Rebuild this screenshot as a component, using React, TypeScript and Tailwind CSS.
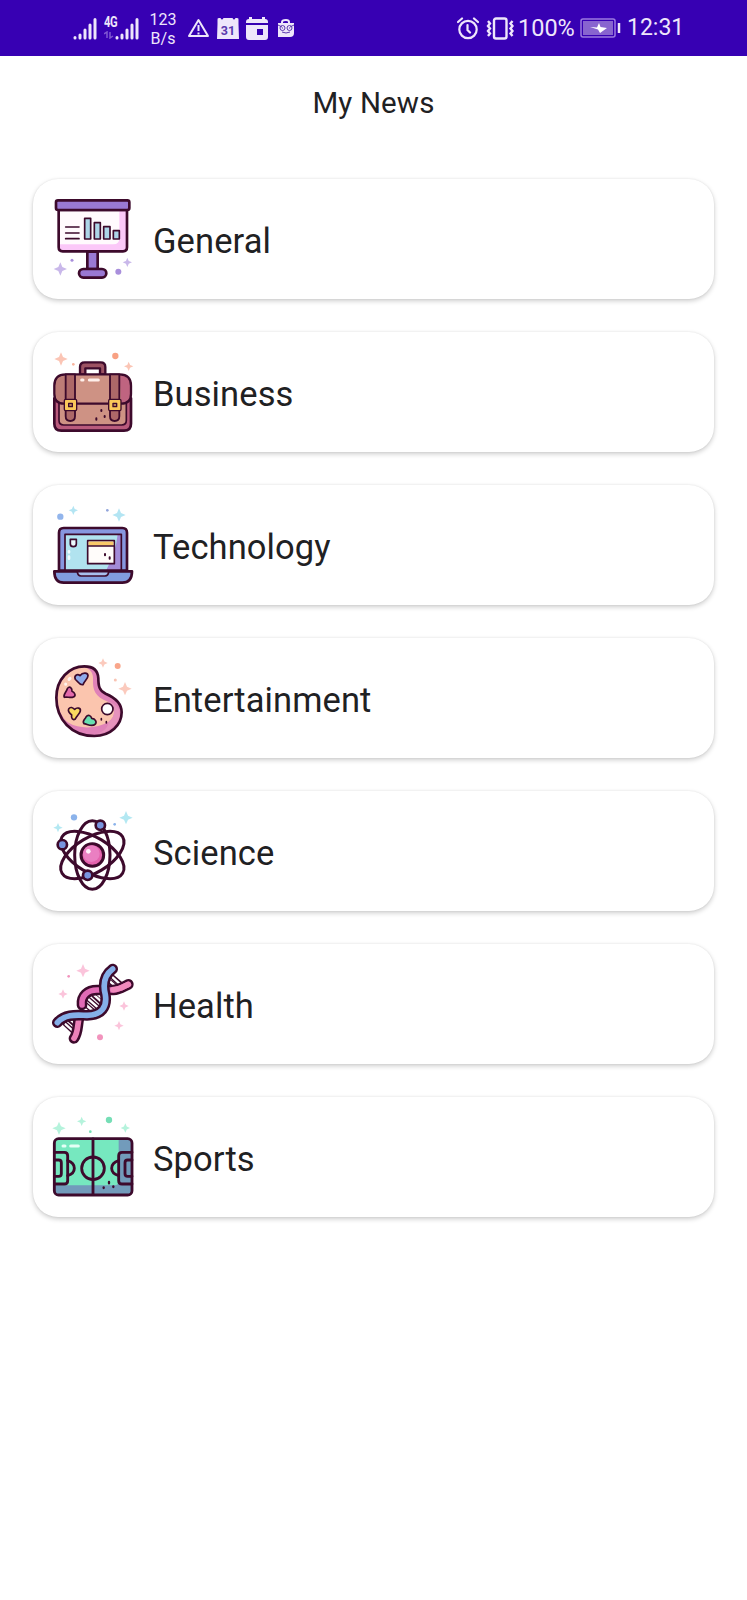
import type { ReactNode } from 'react';

const INK = '#3d0a2c';

function Sparkle({ x, y, r, fill }: { x: number; y: number; r: number; fill: string }) {
  const k = r * 0.3;
  return (
    <path
      fill={fill}
      d={`M${x} ${y - r}L${x + k} ${y - k}L${x + r} ${y}L${x + k} ${y + k}L${x} ${y + r}L${x - k} ${y + k}L${x - r} ${y}L${x - k} ${y - k}Z`}
    />
  );
}

function Icon({ viewBox, children }: { viewBox: string; children: ReactNode }) {
  return (
    <svg
      className="size-[100px] shrink-0"
      viewBox={viewBox}
      fill="none"
      stroke="none"
      strokeLinecap="round"
      strokeLinejoin="round"
    >
      {children}
    </svg>
  );
}

function GeneralIcon() {
  return (
    <Icon viewBox="45 42 300 300">
      <Sparkle x={91} y={282} r={20} fill="#c9b8ea" />
      <Sparkle x={292} y={262} r={14} fill="#c9b8ea" />
      <circle cx="265" cy="290" r="9" fill="#a98fdc" />
      <circle cx="126" cy="256" r="4.5" fill="#a98fdc" />
      <path d="M86 105H291V217Q291 229 279 229H98Q86 229 86 217Z" fill="#fbc8f8" />
      <path d="M88 108H268V190Q268 208 250 208H88Z" fill="#fffafd" />
      <path d="M86 105H291V217Q291 229 279 229H98Q86 229 86 217Z" stroke={INK} strokeWidth="8" />
      <rect x="172" y="230" width="31" height="52" fill="#9a78d3" stroke={INK} strokeWidth="8" />
      <rect x="78" y="76" width="220" height="29" rx="6" fill="#9a78d3" stroke={INK} strokeWidth="8" />
      <rect x="147" y="282" width="82" height="26" rx="13" fill="#9a78d3" stroke={INK} strokeWidth="8" />
      <path d="M107 156H147M107 174H147M107 191H147" stroke={INK} strokeWidth="5" />
      <g fill="#add5e8" stroke={INK} strokeWidth="5">
        <path d="M164 130H182V192H164ZM193 143H211V192H193ZM221 155H240V192H221ZM250 167H268V192H250Z" />
      </g>
    </Icon>
  );
}

function BusinessIcon() {
  return (
    <Icon viewBox="0 -9 300 300">
      <Sparkle x={48} y={42} r={20} fill="#fbc5b5" />
      <Sparkle x={251} y={64} r={14} fill="#fbc5b5" />
      <circle cx="211" cy="33" r="9.5" fill="#f8a183" />
      <circle cx="85" cy="58" r="4" fill="#f8b39c" />
      <path d="M105 88V66Q105 52 119 52H167Q181 52 181 66V88H165V70H121V88Z" fill="#9c5262" stroke={INK} strokeWidth="7" />
      <path d="M28 160H258V236Q258 257 237 257H49Q28 257 28 236Z" fill="#b95a7c" stroke={INK} strokeWidth="8" />
      <path d="M42 170H244V226Q244 240 230 240H56Q42 240 42 226Z" fill="#ce9284" stroke={INK} strokeWidth="5" />
      <path d="M62 88H224Q258 88 258 122V146Q258 176 228 176H58Q28 176 28 146V122Q28 88 62 88Z" fill="#ce9284" />
      <path d="M224 91Q255 91 255 122V146Q255 173 228 173Z" fill="#bf6480" />
      <path d="M32 122Q32 94 60 92V172Q32 172 32 146Z" fill="#bd7c76" />
      <path d="M62 88H224Q258 88 258 122V146Q258 176 228 176H58Q28 176 28 146V122Q28 88 62 88Z" stroke={INK} strokeWidth="7" />
      <path d="M62 88H90V214Q90 228 76 228Q62 228 62 214ZM195 88H223V214Q223 228 209 228Q195 228 195 214Z" fill="#ad6868" stroke={INK} strokeWidth="5.5" />
      <g fill="#f9c85a" stroke={INK} strokeWidth="4">
        <rect x="58" y="163" width="37" height="34" rx="4" />
        <rect x="191" y="163" width="37" height="34" rx="4" />
        <rect x="71" y="175" width="11" height="10" fill="#b98154" />
        <rect x="204" y="175" width="11" height="10" fill="#b98154" />
      </g>
      <path d="M110 105H114M133 105H160" stroke="#fff0eb" strokeWidth="9" />
      <path d="M169 195V198M179 213V216M154 220V224" stroke={INK} strokeWidth="6" />
    </Icon>
  );
}

function TechnologyIcon() {
  return (
    <Icon viewBox="0 0 300 300">
      <Sparkle x={85} y={46} r={14} fill="#b3e5f3" />
      <Sparkle x={222} y={60} r={20} fill="#b3e5f3" />
      <circle cx="46" cy="65" r="9.5" fill="#92b5ec" />
      <circle cx="187" cy="46" r="4" fill="#92a5dc" />
      <path d="M42 227V113Q42 99 56 99H232Q246 99 246 113V227Z" fill="#8797df" stroke={INK} strokeWidth="8" />
      <path d="M60 225V118H229V225Z" fill="#a38bd8" />
      <path d="M60 225V118H218Q213 170 184 225Z" fill="#b1e3ef" />
      <path d="M60 225V118H229V225Z" stroke={INK} strokeWidth="5" />
      <path d="M28 229H261Q261 263 232 263H56Q28 263 28 229Z" fill="#819ddf" stroke={INK} strokeWidth="8" />
      <path d="M97 230H191Q190 243 180 243H108Q98 243 97 230Z" fill="#a8bfee" stroke={INK} strokeWidth="5" />
      <rect x="128" y="137" width="80" height="69" fill="#fffcfa" stroke={INK} strokeWidth="5" />
      <path d="M131 140H205V152H131Z" fill="#f9ca69" />
      <path d="M128 153H208" stroke={INK} strokeWidth="4" />
      <path d="M76 133H94V147Q94 155 85 155Q76 155 76 147Z" fill="#edf9fd" stroke={INK} strokeWidth="5" />
      <path d="M180 177V181M194 187V191" stroke={INK} strokeWidth="6" />
      <path d="M72 169V172M72 185V191" stroke="#f2fcff" strokeWidth="8" />
    </Icon>
  );
}

function EntertainmentIcon() {
  const outline =
    'M160 85C159 60 142 49 118 49C73 49 34 87 34 143C34 208 79 258 148 258C198 258 230 224 230 187C230 157 206 141 182 131C162 122 160 107 160 85Z';
  return (
    <Icon viewBox="0 -6 300 300">
      <Sparkle x={174} y={39} r={14} fill="#fbcabd" />
      <Sparkle x={240} y={116} r={20} fill="#fbcabd" />
      <circle cx="218" cy="48" r="9" fill="#f9a68b" />
      <circle cx="211" cy="90" r="4.5" fill="#f9c4b4" />
      <path d={outline} fill="#e082b8" />
      <path d="M129 56C112 50 102 53 94 56C60 66 38 98 38 143C38 180 52 205 72 219C104 238 156 236 190 216C214 199 212 172 189 155C150 141 143 120 144 91C145 76 142 64 129 56Z" fill="#fbc5ae" />
      <path d="M190 216C214 199 212 172 189 155C215 160 226 178 224 195C220 225 190 250 150 253C180 245 190 230 190 216Z" fill="#e693bd" />
      <path d={outline} stroke={INK} strokeWidth="8" />
      <g stroke={INK} strokeWidth="5">
        <path d="M91 88C86 77 97 70 105 77C112 68 128 66 129 77C129 86 117 94 114 104C103 107 98 93 91 88Z" fill="#8fabea" />
        <path d="M58 142C53 135 64 127 67 116C73 106 82 114 81 124C90 128 94 137 85 141C77 145 65 139 58 142Z" fill="#e36aab" />
        <path d="M71 177C76 169 83 173 89 178C96 171 108 174 106 183C104 193 95 197 91 207C83 212 78 204 80 195C74 190 68 183 71 177Z" fill="#fad95f" />
        <path d="M117 221C110 213 120 209 123 201C129 193 138 196 140 205C151 206 157 216 150 223C142 231 130 224 117 221Z" fill="#67dfb0" />
        <circle cx="187" cy="177" r="17" fill="#fff" />
      </g>
      <path d="M169 206V210M184 215V219" stroke={INK} strokeWidth="5" />
      <path d="M72 88L75 85M62 102V103" stroke="#fff4ee" strokeWidth="9" />
    </Icon>
  );
}

function ScienceIcon() {
  return (
    <Icon viewBox="0 -6 300 300">
      <Sparkle x={39} y={74} r={14} fill="#b3e8f2" />
      <Sparkle x={243} y={44} r={20} fill="#b3e8f2" />
      <circle cx="87" cy="43" r="9.5" fill="#8bb3eb" />
      <circle cx="209" cy="64" r="4" fill="#8bb3eb" />
      <g stroke={INK} strokeWidth="9">
        <ellipse cx="142" cy="156" rx="53" ry="103" />
        <ellipse cx="142" cy="156" rx="106" ry="53" transform="rotate(31 142 156)" />
        <ellipse cx="142" cy="156" rx="106" ry="53" transform="rotate(-31 142 156)" />
        <circle cx="142" cy="156" r="34" fill="#e463ad" />
      </g>
      <circle cx="139" cy="152" r="25" fill="#ea7fc2" />
      <circle cx="130" cy="145" r="7" fill="#fff0fa" />
      <g fill="#7895df" stroke={INK} strokeWidth="8">
        <circle cx="166" cy="67" r="14" />
        <circle cx="52" cy="125" r="14" />
        <circle cx="128" cy="217" r="14" />
      </g>
    </Icon>
  );
}

function HealthIcon() {
  const pinkA = 'M87 250C101 231 96 208 104 181';
  const pinkB = 'M111 150C108 122 128 105 156 105H205C224 104 233 96 250 88';
  const blue = 'M37 203C61 174 103 181 126 181C170 181 187 155 181 119C173 87 180 59 203 42';
  return (
    <Icon viewBox="0 -3 300 300">
      <Sparkle x={114} y={47} r={20} fill="#fbc4db" />
      <Sparkle x={54} y={117} r={14} fill="#fbc4db" />
      <Sparkle x={237} y={153} r={14} fill="#fbc4db" />
      <Sparkle x={222} y={212} r={14} fill="#fbc4db" />
      <circle cx="165" cy="247" r="9" fill="#f294bd" />
      <circle cx="71" cy="64" r="4" fill="#f294bd" />
      <path
        d="M61 207L85 229M73 194L93 211M122 149L144 168M132 134L162 160M148 123L172 145M197 82L215 97M202 66L228 88"
        stroke={INK}
        strokeWidth="15"
      />
      <path
        d="M62 208L84 228M76 194L95 211M120 147L144 168M131 133L162 160M148 121L172 142M196 80L216 98M203 67L226 88"
        stroke="#fff"
        strokeWidth="7"
      />
      <path d={pinkA} stroke={INK} strokeWidth="32" />
      <path d={pinkA} stroke="#ee81b9" strokeWidth="17" />
      <path d={pinkB} stroke={INK} strokeWidth="32" />
      <path d={pinkB} stroke="#e16bb5" strokeWidth="17" />
      <path d="M205 104C224 103 233 96 250 88" stroke="#f18abd" strokeWidth="17" />
      <path d={blue} stroke={INK} strokeWidth="32" />
      <path d={blue} stroke="#85afe9" strokeWidth="17" />
    </Icon>
  );
}

function SportsIcon() {
  return (
    <Icon viewBox="0 -3 300 300">
      <Sparkle x={42} y={61} r={20} fill="#b5f3dc" />
      <Sparkle x={110} y={40} r={14} fill="#b5f3dc" />
      <Sparkle x={241} y={60} r={14} fill="#b5f3dc" />
      <circle cx="192" cy="36" r="9.5" fill="#76deb6" />
      <circle cx="136" cy="71" r="4" fill="#76deb6" />
      <rect x="28" y="92" width="233" height="169" rx="13" fill="#729bbb" />
      <path d="M31 95H221V220Q221 232 209 232H31Z" fill="#76e8bf" />
      <g stroke={INK} strokeWidth="8.5">
        <rect x="28" y="92" width="233" height="169" rx="13" />
        <path d="M144 93V260" />
        <circle cx="144" cy="181" r="34" />
        <path d="M28 133H58Q68 133 68 143V218Q68 228 58 228H28M28 156H41Q49 156 49 164V197Q49 205 41 205H28" />
        <path d="M261 133H231Q221 133 221 143V218Q221 228 231 228H261M261 156H248Q240 156 240 164V197Q240 205 248 205H261" />
        <path d="M68 158Q88 164 88 181Q88 197 68 203M221 158Q200 164 200 181Q200 197 221 203" />
      </g>
      <path d="M54 114H60M77 114H100" stroke="#e5fff6" strokeWidth="9" />
      <path d="M192 222V226M176 238V240M205 235V237" stroke={INK} strokeWidth="7" />
    </Icon>
  );
}

const categories = [
  { name: 'General', Glyph: GeneralIcon },
  { name: 'Business', Glyph: BusinessIcon },
  { name: 'Technology', Glyph: TechnologyIcon },
  { name: 'Entertainment', Glyph: EntertainmentIcon },
  { name: 'Science', Glyph: ScienceIcon },
  { name: 'Health', Glyph: HealthIcon },
  { name: 'Sports', Glyph: SportsIcon },
];

function Signal() {
  return (
    <svg className="h-[23px] w-6" viewBox="0 0 24 23" fill="none" stroke="#eee6fb" strokeWidth="3" strokeLinecap="round">
      <path d="M2 20.5V21M7 18V21M12 13V21M17 8V21M22 2.5V21" />
    </svg>
  );
}

function StatusBar() {
  return (
    <header className="flex h-14 items-center bg-[#3700b3] pl-[73px] text-[#eee6fb]">
      <Signal />
      <div className="ml-[7px] flex h-[23px] w-3 flex-col">
        <span className="origin-left scale-x-[0.8] text-[14px] leading-[11px] font-bold tracking-[-0.5px]">4G</span>
        <svg className="mt-[3px] h-2 w-2.5" viewBox="0 0 10 8" fill="none" stroke="#8058d2" strokeWidth="1.5">
          <path d="M0 3L3 1V7M6 1V7L9 5" />
        </svg>
      </div>
      <div className="-ml-px">
        <Signal />
      </div>
      <div className="ml-[10px] flex w-7 flex-col items-center pt-px text-[16px] leading-[19px]">
        <span>123</span>
        <span>B/s</span>
      </div>
      <svg className="ml-[10px] h-[22px] w-[23px]" viewBox="0 0 23 22" fill="none" stroke="currentColor" strokeWidth="2">
        <path d="M11.5 3L21 19H2Z" strokeLinejoin="round" />
        <path d="M11.5 8V14M11.5 15.5V17.5" />
      </svg>
      <svg className="ml-[7px] h-[23px] w-[22px]" viewBox="0 0 22 23">
        <path d="M2 1H3.5Q5 4 6.5 1H15.5Q17 4 18.5 1H20Q22 1 21.5 3V7L22 22H0L.5 7V3Q0 1 2 1Z" fill="currentColor" />
        <text x="11" y="18" textAnchor="middle" fontFamily="Roboto" fontSize="12.5" fontWeight="700" fill="#5a38ae">31</text>
      </svg>
      <svg className="ml-[7px] h-[23px] w-[22px]" viewBox="0 0 22 23" fill="currentColor">
        <path fillRule="evenodd" d="M3 0H6V2H16V0H19V2Q22 2 22 5V6H0V5Q0 2 3 2ZM0 8H22V20Q22 23 19 23H3Q0 23 0 20ZM11 12V18H17V12Z" />
      </svg>
      <svg className="ml-[9px] h-[21px] w-[18px]" viewBox="0 0 18 21" fill="none">
        <path d="M5 6V4Q5 2 9 2Q12 2 12 4V6" stroke="currentColor" strokeWidth="2" />
        <path d="M1 5H17V15Q17 19 13 19H1Z" fill="currentColor" />
        <g stroke="#5a38ae" strokeWidth="1">
          <circle cx="5.5" cy="10" r="2.5" />
          <circle cx="12.5" cy="10" r="2.5" />
          <path d="M1 7L5 9M17 7L13 9M5 14Q9 16 13 14M5 10H6M12 10H13" />
        </g>
      </svg>
      <svg className="ml-[162px] h-[23px] w-[22px]" viewBox="0 0 22 23" fill="none" stroke="currentColor" strokeWidth="2.2" strokeLinecap="round">
        <circle cx="11" cy="12.5" r="8.7" />
        <path d="M1 5L5 1.5M21 5L17 1.5M10.5 8V13L13 15.5" />
      </svg>
      <svg className="ml-[7px] h-[23px] w-[28px]" viewBox="0 0 28 23" fill="none" stroke="currentColor" strokeWidth="2.4">
        <rect x="8" y="1.5" width="12.5" height="20" rx="2" />
        <path d="M2 4L4 6.5L2 9L4 11.500L2 14L4 16.500L2 19M26.500 4L24.500 6.500L26.500 9L24.500 11.500L26.500 14L24.500 16.500L26.500 19" />
      </svg>
      <span className="ml-[4px] w-[56px] pt-px text-[23.5px] whitespace-nowrap">100%</span>
      <svg className="ml-[6px] h-[20px] w-[41px]" viewBox="0 0 41 20" fill="none">
        <rect x="1" y="1" width="34" height="18" rx="2" stroke="#9c7ae0" strokeWidth="1.5" />
        <rect x="3" y="3" width="30" height="14" fill="#8864cf" />
        <path d="M10 9L17 9.500L19 5L20.500 9L27 10L20 15L18 11.500Z" fill="#fff" />
        <path d="M39 5V15" stroke="currentColor" strokeWidth="2.5" />
      </svg>
      <span className="ml-[6px] pt-px text-[23px] whitespace-nowrap">12:31</span>
    </header>
  );
}

export default function App() {
  return (
    <div className="min-h-[1600px] bg-white font-[Roboto,sans-serif] text-[#1f2123]">
      <StatusBar />
      <h1 className="flex h-[93px] items-center justify-center pt-0.5 text-[29.5px] tracking-[0.15px]">My News</h1>
      <main className="flex flex-col gap-[33px] pt-[30px] pr-[33px] pl-[33px]">
        {categories.map(({ name, Glyph }) => (
          <section
            key={name}
            className="flex h-[120px] items-center rounded-[25px] bg-white pl-3 shadow-[0_2px_5px_rgba(0,0,0,0.2),0_0_2px_rgba(0,0,0,0.08)]"
          >
            <Glyph />
            <h2 className="ml-2 pt-[6px] text-[34.5px] tracking-[0.1px]">{name}</h2>
          </section>
        ))}
      </main>
    </div>
  );
}
